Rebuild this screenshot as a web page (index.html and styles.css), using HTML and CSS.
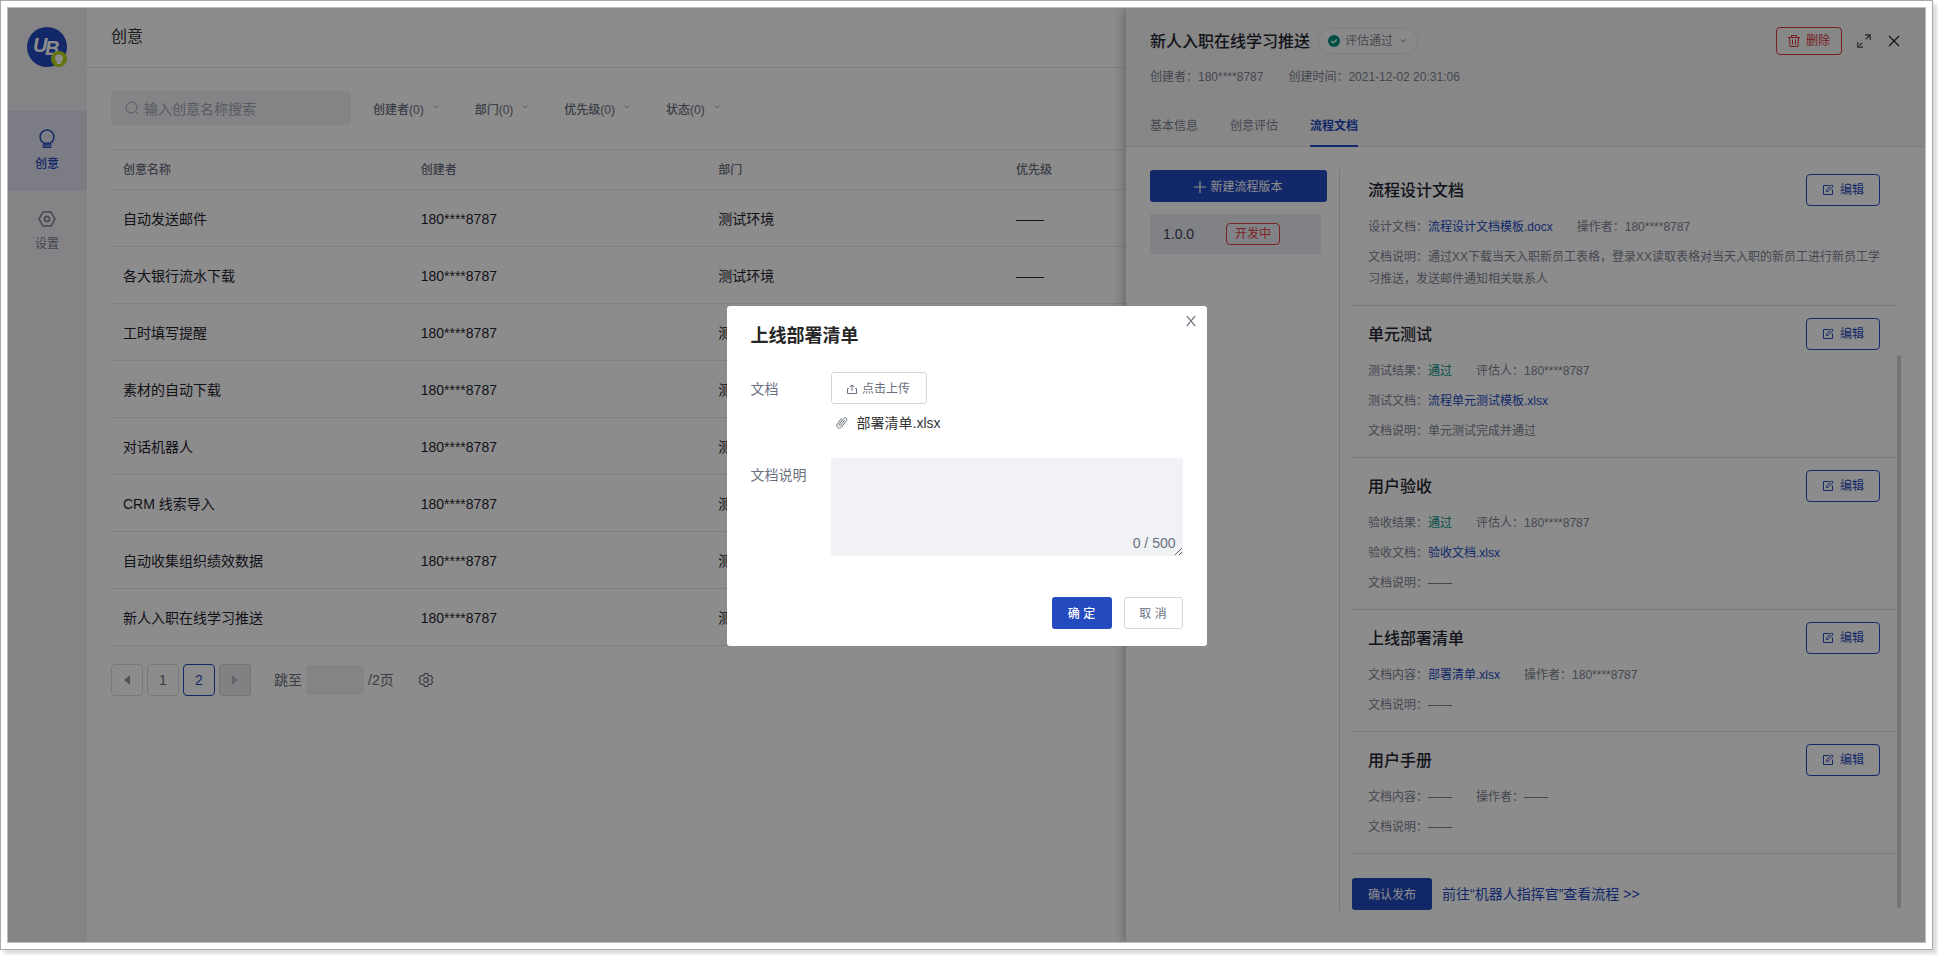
FILE: index.html
```html
<!DOCTYPE html>
<html lang="zh-CN">
<head>
<meta charset="utf-8">
<title>创意</title>
<link rel="stylesheet" href="styles.css">
</head>
<body>
<svg class="sprite" aria-hidden="true">
  <symbol id="i-edit" viewBox="0 0 12 12"><path d="M7.500 1.500h-6v9h9V5.500M4.500 7.700l.3-1.900L9.700.800l1.500 1.400-5 5.100z" fill="none" stroke="currentColor"/></symbol>
  <symbol id="i-down" viewBox="0 0 8 8"><path d="M1.500 2.500L4 5l2.500-2.500" fill="none" stroke="currentColor"/></symbol>
  <symbol id="i-close" viewBox="0 0 12 12"><path d="M1 1l10 10M11 1L1 11" fill="none" stroke="currentColor" stroke-width="1.200"/></symbol>
</svg>
<div class="frame">
  <div class="screen">
    <div class="app">
      <nav class="sidebar">
        <svg class="logo" viewBox="0 0 40 40" role="img" aria-label="UB">
          <circle cx="20" cy="20" r="20" fill="#234abf"/>
          <g class="logo-text"><text x="6" y="25">U</text><text x="18" y="28">B</text></g>
          <circle cx="32" cy="32" r="8" fill="#bad418"/>
          <path d="M32 27.200a4 4 0 0 0-2.200 7.300V37h4.400v-2.500A4 4 0 0 0 32 27.200z" fill="#fff"/>
        </svg>
        <a class="nav-item active" href="#">
          <svg width="18" height="20" viewBox="0 0 18 20" fill="none" stroke="currentColor" stroke-width="1.500"><path d="M5.800 14.200a7 7 0 1 1 6.400 0zM4.500 16h9M4.500 18.200h9"/></svg>
          <span>创意</span>
        </a>
        <a class="nav-item" href="#">
          <svg width="18" height="20" viewBox="0 0 18 20" fill="none" stroke="currentColor" stroke-width="1.500"><path d="M5 3h8l4 7-4 7H5l-4-7z"/><circle cx="9" cy="10" r="2.500"/></svg>
          <span>设置</span>
        </a>
      </nav>
      <main class="main">
        <header class="topbar"><h1>创意</h1></header>
        <div class="content">
          <div class="filters">
            <label class="search">
              <svg width="14" height="14" viewBox="0 0 14 14" fill="none" stroke="currentColor"><circle cx="6.500" cy="6.500" r="5.500"/><path d="M10.500 10.500l2.500 2.500"/></svg>
              <input type="text" placeholder="输入创意名称搜索" aria-label="搜索">
            </label>
            <button class="filter" type="button">创建者(0)<svg><use href="#i-down"/></svg></button>
            <button class="filter" type="button">部门(0)<svg><use href="#i-down"/></svg></button>
            <button class="filter" type="button">优先级(0)<svg><use href="#i-down"/></svg></button>
            <button class="filter" type="button">状态(0)<svg><use href="#i-down"/></svg></button>
          </div>
          <table class="ideas">
            <thead><tr><th>创意名称</th><th>创建者</th><th>部门</th><th>优先级</th><th></th><th></th></tr></thead>
            <tbody>
              <tr><td>自动发送邮件</td><td>180****8787</td><td>测试环境</td><td>——</td><td></td><td></td></tr>
              <tr><td>各大银行流水下载</td><td>180****8787</td><td>测试环境</td><td>——</td><td></td><td></td></tr>
              <tr><td>工时填写提醒</td><td>180****8787</td><td>测试环境</td><td>——</td><td></td><td></td></tr>
              <tr><td>素材的自动下载</td><td>180****8787</td><td>测试环境</td><td>——</td><td></td><td></td></tr>
              <tr><td>对话机器人</td><td>180****8787</td><td>测试环境</td><td>——</td><td></td><td></td></tr>
              <tr><td>CRM 线索导入</td><td>180****8787</td><td>测试环境</td><td>——</td><td></td><td></td></tr>
              <tr><td>自动收集组织绩效数据</td><td>180****8787</td><td>测试环境</td><td>——</td><td></td><td></td></tr>
              <tr><td>新人入职在线学习推送</td><td>180****8787</td><td>测试环境</td><td>——</td><td></td><td></td></tr>
            </tbody>
          </table>
          <div class="pager">
            <button class="page arrow" type="button" aria-label="上一页"><svg width="8" height="10" viewBox="0 0 8 10"><path d="M7 0v10L1 5z" fill="currentColor"/></svg></button>
            <button class="page" type="button">1</button>
            <button class="page current" type="button">2</button>
            <button class="page arrow disabled" type="button" aria-label="下一页"><svg width="8" height="10" viewBox="0 0 8 10"><path d="M1 0v10l6-5z" fill="currentColor"/></svg></button>
            <label class="jump" for="jump">跳至</label><input id="jump" type="text"><span>/2页</span>
            <button class="gear" type="button" aria-label="列设置"><svg width="16" height="16" viewBox="0 0 16 16" fill="none" stroke="currentColor" stroke-width="1.200" stroke-linejoin="round"><path d="M6.400 1.500h3.200l.5 1.800 1.200.7 1.800-.5 1.600 2.800L13.400 8l1.300 1.700-1.600 2.800-1.800-.5-1.200.7-.5 1.800H6.400l-.5-1.800-1.200-.7-1.800.5-1.600-2.800L2.600 8 1.300 6.300l1.600-2.800 1.800.5 1.200-.7z"/><circle cx="8" cy="8" r="2.300"/></svg></button>
          </div>
        </div>
      </main>
    </div>

    <aside class="drawer">
      <header class="drawer-head">
        <div class="title-row">
          <h2>新人入职在线学习推送</h2>
          <button class="status" type="button">
            <svg width="12" height="12" viewBox="0 0 12 12"><circle cx="6" cy="6" r="6" fill="#00907c"/><path d="M3.300 6l2 2 3.400-3.400" fill="none" stroke="#fff" stroke-width="1.400"/></svg>
            评估通过
            <svg class="chev"><use href="#i-down"/></svg>
          </button>
          <div class="tools">
            <button class="delete" type="button"><svg width="12" height="12" viewBox="0 0 12 12" fill="none" stroke="currentColor"><path d="M0 2.500h12M3.500 2.500v-2h5v2M1.500 2.500l.5 9h8l.5-9M4.500 4.500v5M7.500 4.500v5"/></svg>删除</button>
            <button class="icon" type="button" aria-label="全屏"><svg width="14" height="14" viewBox="0 0 14 14" fill="none" stroke="currentColor" stroke-width="1.200"><path d="M8 .8h5.200V6M13 1L8.800 5.200M.8 8v5.200H6M2.500 11.500l2.700-2.700"/></svg></button>
            <button class="icon close" type="button" aria-label="关闭"><svg width="12" height="12"><use href="#i-close"/></svg></button>
          </div>
        </div>
        <p class="meta"><span>创建者：180****8787</span><span>创建时间：2021-12-02 20:31:06</span></p>
        <nav class="tabs"><a href="#">基本信息</a><a href="#">创意评估</a><a href="#" class="on">流程文档</a></nav>
      </header>
      <div class="drawer-body">
        <div class="versions">
          <button class="primary new" type="button"><svg width="12" height="12" viewBox="0 0 12 12" stroke="currentColor" stroke-width="1.200"><path d="M6 0v12M0 6h12"/></svg>新建流程版本</button>
          <div class="version"><span>1.0.0</span><span class="tag">开发中</span></div>
        </div>
        <div class="docs">
          <section class="doc">
            <div class="doc-head"><h3>流程设计文档</h3><button class="edit" type="button"><svg><use href="#i-edit"/></svg>编辑</button></div>
            <p><span>设计文档：<a href="#">流程设计文档模板.docx</a></span><span>操作者：180****8787</span></p>
            <p>文档说明：通过XX下载当天入职新员工表格，登录XX读取表格对当天入职的新员工进行新员工学习推送，发送邮件通知相关联系人</p>
          </section>
          <section class="doc">
            <div class="doc-head"><h3>单元测试</h3><button class="edit" type="button"><svg><use href="#i-edit"/></svg>编辑</button></div>
            <p><span>测试结果：<b class="pass">通过</b></span><span>评估人：180****8787</span></p>
            <p>测试文档：<a href="#">流程单元测试模板.xlsx</a></p>
            <p>文档说明：单元测试完成并通过</p>
          </section>
          <section class="doc">
            <div class="doc-head"><h3>用户验收</h3><button class="edit" type="button"><svg><use href="#i-edit"/></svg>编辑</button></div>
            <p><span>验收结果：<b class="pass">通过</b></span><span>评估人：180****8787</span></p>
            <p>验收文档：<a href="#">验收文档.xlsx</a></p>
            <p>文档说明：——</p>
          </section>
          <section class="doc">
            <div class="doc-head"><h3>上线部署清单</h3><button class="edit" type="button"><svg><use href="#i-edit"/></svg>编辑</button></div>
            <p><span>文档内容：<a href="#">部署清单.xlsx</a></span><span>操作者：180****8787</span></p>
            <p>文档说明：——</p>
          </section>
          <section class="doc">
            <div class="doc-head"><h3>用户手册</h3><button class="edit" type="button"><svg><use href="#i-edit"/></svg>编辑</button></div>
            <p><span>文档内容：——</span><span>操作者：——</span></p>
            <p>文档说明：——</p>
          </section>
          <div class="publish"><button class="primary" type="button">确认发布</button><a href="#">前往“机器人指挥官”查看流程 &gt;&gt;</a></div>
        </div>
        <div class="scrollbar"><div class="thumb"></div></div>
      </div>
    </aside>

    <div class="mask">
      <div class="modal" role="dialog" aria-labelledby="dlg-title">
        <button class="modal-close" type="button" aria-label="关闭"><svg width="10" height="12" viewBox="0 0 12 12" preserveAspectRatio="none"><use href="#i-close"/></svg></button>
        <h2 id="dlg-title">上线部署清单</h2>
        <div class="field">
          <label for="upload">文档</label>
          <div>
            <button id="upload" class="plain" type="button"><svg width="10" height="10" viewBox="0 0 10 10" fill="none" stroke="currentColor"><path d="M5 7V1M2.800 3L5 .8 7.200 3M1.800 4.500H.5v5h9v-5H8.200"/></svg>点击上传</button>
            <div class="file"><svg width="12" height="14" viewBox="0 0 12 14" fill="none" stroke="currentColor"><path d="M8.800 4L4.700 9.200c-.8 1-2.200 0-1.400-1.100l4.400-5.600c1.500-1.800 4.200.2 2.800 2.100l-5 6.500c-2.200 2.700-6.200-.3-4.200-3.200L5.600 2.300"/></svg>部署清单.xlsx</div>
          </div>
        </div>
        <div class="field">
          <label for="note">文档说明</label>
          <div class="area"><textarea id="note"></textarea><span class="count">0 / 500</span></div>
        </div>
        <footer><button class="primary ok" type="button">确 定</button><button class="plain" type="button">取 消</button></footer>
      </div>
    </div>
  </div>
</div>
</body>
</html>
```

FILE: styles.css
```css
* { box-sizing: border-box; }
body, h1, h2, h3, p { margin: 0; }
body {
  height: 100vh;
  padding: 0 5px 5px 0;
  overflow: hidden;
  background: #fff;
  color: #1f2430;
  font: 14px/22px "Liberation Sans", "Noto Sans CJK SC", sans-serif;
}
button, input, textarea { font: inherit; color: inherit; margin: 0; border: 0; outline: 0; }
button { display: inline-flex; align-items: center; justify-content: center; padding: 0; background: none; font-size: 12px; white-space: nowrap; }
a { color: #234abf; text-decoration: none; }
svg { display: block; flex: none; }
.sprite { position: absolute; width: 0; height: 0; }

.frame { height: 100%; padding: 6px; border: 1px solid #a9a9a9; box-shadow: 4px 4px 4px rgba(0, 0, 0, .15); }
.screen { position: relative; height: 100%; border: 1px solid #bcbcbc; overflow: hidden; }
.app { display: flex; height: 100%; }

.sidebar { width: 79px; flex: none; background: #f0f0f4; }
.logo { width: 40px; height: 40px; margin: 19px 0 44px 19px; }
.logo-text { fill: #fff; font: italic bold 20px "Liberation Sans", sans-serif; }
.nav-item { display: flex; flex-direction: column; align-items: center; gap: 4px; height: 80px; padding: 18px 1px 0 0; color: #7e8294; font-size: 12px; }
.nav-item.active { background: #e2e4f0; color: #234abf; font-weight: 500; }

.main { flex: 1; min-width: 0; }
.topbar { height: 60px; padding: 18px 24px; border-bottom: 1px solid #e8e9ec; }
.topbar h1 { font-size: 16px; line-height: 22px; font-weight: 400; color: #333; }
.content { padding: 23px 28px 0 24px; }
.filters { display: flex; align-items: center; gap: 35px; height: 34px; margin-bottom: 24px; }
.search { display: flex; align-items: center; gap: 5px; width: 240px; height: 34px; margin-right: -13px; padding: 0 14px; border-radius: 4px; background: #f0f1f5; color: #9aa0ae; }
.search input { flex: 1; min-width: 0; padding: 2px 0 0; background: none; }
.search input::placeholder { color: #9fa4b2; }
.filter { gap: 8px; padding-top: 4px; color: #6a7080; font-weight: 500; }
.filter svg { width: 8px; height: 8px; margin-bottom: 6px; color: #a4a8b4; }

.ideas { width: 100%; border-collapse: collapse; table-layout: fixed; border-top: 1px solid #e8e9ec; }
.ideas th, .ideas td { padding: 1px 12px 0; text-align: left; border-bottom: 1px solid #e8e9ec; font-weight: 400; }
.ideas th { height: 40px; font-size: 12px; font-weight: 500; color: #6a7080; }
.ideas td { height: 57px; }

.pager { display: flex; align-items: center; gap: 4px; margin-top: 18px; color: #6a6f7c; }
.page { width: 32px; height: 32px; border: 1px solid #dcdde1; border-radius: 4px; font-size: 14px; }
.page.arrow { color: #9298aa; }
.page.current { border-color: #234abf; color: #234abf; }
.page.disabled { background: #ececee; border-color: #d2d3d6; color: #b8bac4; }
.jump { margin-left: 19px; }
.pager input { width: 58px; height: 30px; border-radius: 4px; background: #f0f1f5; }
.gear { margin-left: 20px; color: #6a6f7c; }

.drawer { position: absolute; top: 0; right: 0; bottom: 0; display: flex; flex-direction: column; width: 799px; background: #fff; box-shadow: -2px 0 10px rgba(20, 24, 60, .3); }
.drawer-head { padding: 18px 24px 0; background: #f6f6f6; border-bottom: 1px solid #e6e6e9; }
.title-row { display: flex; align-items: center; height: 30px; }
.title-row h2 { padding-top: 1px; font-size: 16px; font-weight: 500; }
.status { gap: 5px; height: 26px; margin-left: 8px; padding: 0 10px 0 9px; border: 1px solid #e6e6e9; border-radius: 13px; background: #fafafa; color: #858997; }
.chev { width: 8px; height: 8px; margin-left: 1px; }
.tools { display: flex; align-items: center; margin-left: auto; }
.delete { gap: 6px; width: 66px; height: 28px; border: 1px solid #d9363e; border-radius: 4px; color: #d9363e; }
.icon { margin-left: 15px; color: #444; }
.icon.close { margin: 0 1px 0 17px; color: #222; }
.meta { display: flex; gap: 25px; margin-top: 10px; font-size: 12px; color: #7e8294; }
.tabs { display: flex; gap: 32px; margin-top: 27px; font-size: 12px; }
.tabs a { height: 32px; margin-bottom: -1px; color: #7e8294; }
.tabs .on { color: #234abf; font-weight: 700; border-bottom: 2px solid #234abf; }
.drawer-body { display: flex; flex: 1; min-height: 0; padding: 23px 24px 31px; }
.versions { width: 190px; flex: none; border-right: 1px solid #dcdde1; }
.primary { height: 32px; padding-top: 1px; border-radius: 3px; background: #234abf; color: #fff; }
.new { gap: 4px; width: 177px; }
.version { display: flex; align-items: center; height: 40px; width: 171px; margin-top: 12px; padding-left: 13px; background: #ecedf5; color: #3c4150; }
.version span:first-child { width: 63px; }
.tag { width: 54px; height: 22px; line-height: 20px; border: 1px solid #e0403f; border-radius: 4px; color: #e0403f; font-size: 12px; text-align: center; }
.docs { flex: 1; min-width: 0; margin-left: 12px; }
.doc { padding: 12px 16px 7px; border-bottom: 1px solid #dfe0e6; font-size: 12px; color: #7e8294; }
.doc:first-child { padding-top: 4px; }
.doc-head { display: flex; align-items: center; justify-content: space-between; margin-bottom: 10px; }
.doc h3 { padding-top: 2px; font-size: 16px; font-weight: 500; color: #1f2430; }
.doc p { margin: 0 -8px 8px 0; }
.doc p span + span { margin-left: 24px; }
.pass { font-weight: 400; color: #00907c; }
.edit { gap: 6px; width: 74px; height: 32px; border: 1px solid #234abf; border-radius: 4px; color: #234abf; }
.edit svg { width: 12px; height: 12px; }
.publish { display: flex; align-items: center; gap: 10px; margin-top: 24px; }
.publish .primary { width: 80px; }
.scrollbar { display: flex; align-items: flex-end; width: 5px; padding-bottom: 3px; }
.thumb { width: 4px; height: 75%; margin-left: 1px; border-radius: 2px; background: #cfd5da; }

.mask { position: absolute; inset: 0; display: flex; align-items: center; justify-content: center; padding-top: 2px; background: rgba(0, 0, 0, .45); }
.modal { position: relative; width: 480px; padding: 18px 24px 17px; border-radius: 3px; background: #fff; color: #6a7080; }
.modal h2 { margin-bottom: 23px; font-size: 18px; line-height: 25px; font-weight: 700; color: #262626; }
.modal-close { position: absolute; top: 9px; right: 11px; color: #6a7080; }
.field { display: grid; grid-template-columns: 80px 1fr; margin-bottom: 24px; }
.field label { height: 32px; line-height: 32px; padding-top: 1px; }
.plain { height: 32px; padding-top: 1px; border: 1px solid #d5d6db; border-radius: 3px; background: #fff; color: #6a7080; }
.field .plain { gap: 5px; width: 96px; }
.file { display: flex; align-items: center; gap: 9px; margin-top: 8px; padding-left: 5px; color: #333; }
.file svg { color: #6a7080; }
.area { position: relative; }
.area textarea { display: block; width: 100%; height: 98px; border-radius: 3px; background: #f0f2f6; resize: vertical; }
.count { position: absolute; right: 7px; bottom: 2px; }
.modal footer { display: flex; justify-content: flex-end; gap: 12px; margin-top: 41px; }
.modal footer .plain { width: 59px; }
.ok { width: 60px; font-weight: 500; }
```
